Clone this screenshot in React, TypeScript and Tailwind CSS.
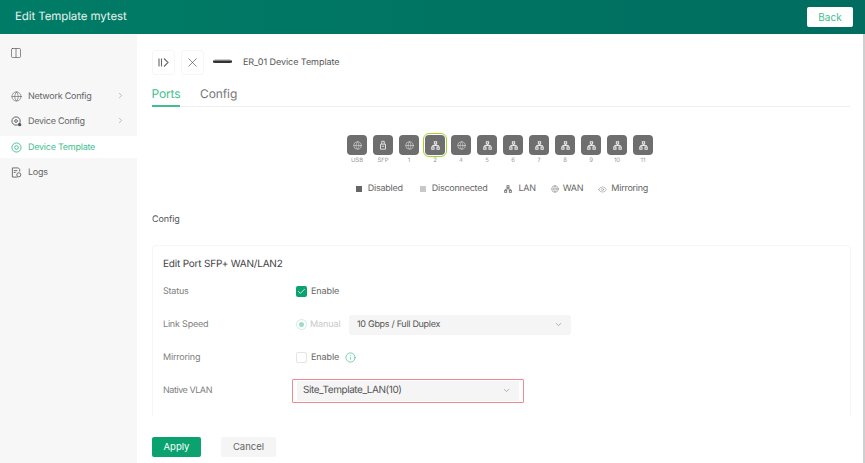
import React from "react";
import { ChevronRight, ChevronDown, Check, X, Info, Eye, Globe, Columns2 } from "lucide-react";

const Lan = ({ c = "#e8e8e8", s = 9 }: { c?: string; s?: number }) => (
  <svg width={s} height={s} viewBox="0 0 12 12" fill="none" stroke={c} strokeWidth="1.4">
    <rect x="4.5" y="1" width="3" height="3" />
    <rect x="1" y="8" width="3" height="3" />
    <rect x="8" y="8" width="3" height="3" />
    <path d="M6 4v2M2.5 8V6h7v2" />
  </svg>
);
const Wan = ({ c = "#e8e8e8", s = 9 }: { c?: string; s?: number }) => <Globe size={s} color={c} strokeWidth={1.4} />;
const Sfp = () => (
  <svg width="10" height="10" viewBox="0 0 12 12" fill="none" stroke="#e8e8e8" strokeWidth="1.1">
    <path d="M3 5h6v6H3zM4.500 5V1.500h3V5M4.500 7.500h3" />
  </svg>
);

const ports: { label: string; icon: "wan" | "lan" | "sfp"; active?: boolean }[] = [
  { label: "USB", icon: "wan" },
  { label: "SFP", icon: "sfp" },
  { label: "1", icon: "wan" },
  { label: "2", icon: "lan", active: true },
  { label: "4", icon: "wan" },
  { label: "5", icon: "lan" },
  { label: "6", icon: "lan" },
  { label: "7", icon: "lan" },
  { label: "8", icon: "lan" },
  { label: "9", icon: "lan" },
  { label: "10", icon: "lan" },
  { label: "11", icon: "lan" },
];

const Row = ({ label, children, h, wide }: { label: string; children: React.ReactNode; h: string; wide?: boolean }) => (
  <div className={`flex items-center ${h}`}>
    <div className={`w-[133px] pt-[1px] text-[9px] text-[#808080] ${wide ? "tracking-[-0.45px]" : "tracking-[-0.2px]"}`}>{label}</div>
    {children}
  </div>
);

export default function App() {
  return (
    <div className="flex h-[463px] w-[865px] flex-col overflow-hidden bg-white text-[#555] [text-rendering:geometricPrecision]" style={{ fontFamily: "Inter, 'Liberation Sans', sans-serif" }}>
      <header className="flex h-[34px] shrink-0 items-center justify-between bg-gradient-to-r from-[#007c66] to-[#006d60] pl-[15px] pr-[12px]">
        <span className="text-[11.5px] tracking-[-0.1px] text-[#e6f3ef]">Edit Template mytest</span>
        <button className="flex h-[20px] w-[46px] items-center justify-center rounded-[2px] bg-white text-[10px] text-[#3fbf8f]">Back</button>
      </header>
      <div className="flex min-h-0 flex-1">
        <aside className="w-[137px] shrink-0 bg-[#f7f7f7] pt-[13px] text-[9px] tracking-[-0.25px] text-[#666]">
          <Columns2 size={12} strokeWidth={1.2} color="#444" className="ml-[10px]" />
          <nav className="mt-[25px] flex flex-col">
            <div className="flex h-[25px] items-center pl-[11px] pr-[12px]">
              <Globe size={11} strokeWidth={1.2} color="#555" />
              <span className="ml-[6px] flex-1 pt-[1px]">Network Config</span>
              <ChevronRight size={9} color="#aaa" className="mb-[3px]" />
            </div>
            <div className="flex h-[27px] items-center pb-[2px] pl-[11px] pr-[12px]">
              <svg width="11" height="11" viewBox="0 0 12 12" fill="none" stroke="#555" strokeWidth="1">
                <circle cx="5.5" cy="5.5" r="4.5" />
                <circle cx="5.5" cy="5.5" r="1.5" />
                <circle cx="9.5" cy="9.5" r="1.8" fill="#555" stroke="none" />
              </svg>
              <span className="ml-[6px] flex-1 pt-[1px]">Device Config</span>
              <ChevronRight size={9} color="#aaa" className="mb-[3px]" />
            </div>
            <div className="flex h-[22px] items-center bg-white pl-[11px] text-[#3fbf8f]">
              <svg width="11" height="11" viewBox="0 0 12 12" fill="none" stroke="#3fbf8f" strokeWidth="1">
                <circle cx="6" cy="6" r="5" />
                <circle cx="6" cy="6" r="2" />
              </svg>
              <span className="ml-[6px] pt-[1px]">Device Template</span>
            </div>
            <div className="flex h-[29px] items-center pl-[11px]">
              <svg width="11" height="11" viewBox="0 0 12 12" fill="none" stroke="#555" strokeWidth="0.9">
                <path d="M7 11H1.500V1h6.500l1.500 1.500V5M3 4h4M3 6h2" />
                <circle cx="8.5" cy="8.5" r="2.2" />
              </svg>
              <span className="ml-[6px] pt-[1px]">Logs</span>
            </div>
          </nav>
        </aside>
        <main className="flex min-w-0 flex-1 flex-col pl-[15px] pr-[13px] pt-[16px]">
          <div className="flex h-[25px] items-center">
            <div className="flex h-[25px] w-[23px] items-center justify-center rounded-[3px] border border-[#f6f6f6]">
              <svg width="11" height="11" viewBox="0 0 11 11" fill="none" stroke="#666" strokeWidth="1.1">
                <path d="M1 1.500v8M3.500 1.500v8M6 1.500l4 4-4 4" />
              </svg>
            </div>
            <div className="ml-[6px] flex h-[25px] w-[23px] items-center justify-center rounded-[3px] border border-[#f6f6f6]">
              <X size={15} strokeWidth={1} color="#444" />
            </div>
            <svg width="19" height="5" viewBox="0 0 19 5" className="mb-[2px] ml-[9px]">
              <path d="M2 0.500H17L18 1.500H1z" fill="#999" />
              <path d="M0 1.500H19V3.500L17 4H2L0 3.500z" fill="#333" />
            </svg>
            <span className="ml-[11px] pt-[1px] text-[9px] tracking-[-0.05px] text-[#555]">ER_01 Device Template</span>
          </div>
          <div className="mt-[8px] flex h-[24px] items-start border-b border-[#eee]">
            <span className="flex h-[24px] w-[28px] justify-center border-b-2 border-[#3fbf8f] text-[12px] leading-[22px] tracking-[-0.1px] text-[#3fbf8f]">Ports</span>
            <span className="ml-[20px] text-[12px] leading-[22px] tracking-[-0.1px] text-[#777]">Config</span>
          </div>
          <div className="mt-[28px] flex justify-center pr-[2px]">
            <div className="flex gap-[6px]">
              {ports.map((p) => (
                <div key={p.label} className="flex w-[20px] flex-col items-center">
                  <div className={`flex h-[20px] w-[20px] items-center justify-center rounded-[4px] bg-[#6e6e6e] ${p.active ? "outline-[1.5px] outline-offset-[1px] outline-[#a2d42c]" : ""}`}>
                    {p.icon === "wan" ? <Wan /> : p.icon === "lan" ? <Lan /> : <Sfp />}
                  </div>
                  <span className="mt-[1px] text-[6px] leading-[9px] text-[#999]">{p.label}</span>
                </div>
              ))}
            </div>
          </div>
          <div className="mt-[17px] flex h-[14px] items-center justify-center gap-[17px] pl-[2px] text-[9px] tracking-[-0.25px] text-[#666]">
            <span className="flex items-center gap-[6px]"><i className="h-[6px] w-[6px] bg-[#666]" />Disabled</span>
            <span className="flex items-center gap-[6px]"><i className="h-[6px] w-[6px] bg-[#c8c8c8]" />Disconnected</span>
            <span className="mr-[-2px] flex items-center gap-[6px]"><Lan c="#777" s={8} />LAN</span>
            <span className="mr-[-2px] flex items-center gap-[4px]"><Wan c="#777" s={8} />WAN</span>
            <span className="flex items-center gap-[4px]"><Eye size={9} color="#777" strokeWidth={1.2} />Mirroring</span>
          </div>
          <div className="mt-[18px] text-[9px] leading-[12px] tracking-[-0.1px] text-[#555]">Config</div>
          <section className="mr-[-1px] mt-[19px] h-[171px] rounded-t-[4px] border border-b-0 border-[#f6f6f6] pl-[10px] pt-[11px]">
            <h2 className="text-[10px] font-normal leading-[14px] tracking-[-0.2px] text-[#444]">Edit Port SFP+ WAN/LAN2</h2>
            <div className="mt-[3px]">
              <Row label="Status" h="h-[34px]">
                <span className="flex h-[11px] w-[11px] items-center justify-center rounded-[2px] bg-[#0aa36f]"><Check size={9} color="#fff" strokeWidth={2} /></span>
                <span className="ml-[4px] pt-[1px] text-[9px] tracking-[-0.1px] text-[#666]">Enable</span>
              </Row>
              <Row label="Link Speed" h="h-[33px]">
                <span className="flex h-[11px] w-[11px] items-center justify-center rounded-full border border-[#cdeee2]"><i className="h-[5px] w-[5px] rounded-full bg-[#9fdcc6]" /></span>
                <span className="ml-[3px] w-[35px] pt-[1px] text-[9px] tracking-[-0.1px] text-[#c8c8c8]">Manual</span>
                <div className="ml-[4px] flex h-[20px] w-[222px] items-center justify-between rounded-[3px] bg-[#f5f5f5] pl-[8px] pr-[8px] text-[9px] tracking-[-0.3px] text-[#555]">
                  10 Gbps / Full Duplex
                  <ChevronDown size={9} color="#999" />
                </div>
              </Row>
              <Row label="Mirroring" h="h-[33px]">
                <span className="h-[11px] w-[11px] rounded-[2px] border border-[#e4e4e4]" />
                <span className="ml-[4px] pt-[1px] text-[9px] tracking-[-0.1px] text-[#666]">Enable</span>
                <Info size={11} color="#3fbf8f" strokeWidth={1.5} className="ml-[6px]" />
              </Row>
              <Row label="Native VLAN" h="h-[33px]" wide>
                <div className="ml-[-4px] flex h-[24px] w-[232px] items-center rounded-[1px] border border-[#ef8a90] px-[4px] py-[1px]">
                  <div className="flex h-full w-full items-center justify-between bg-[#f5f5f5] pl-[6px] pr-[8px] text-[10px] tracking-[-0.45px] text-[#555]">
                    Site_Template_LAN(10)
                    <ChevronDown size={9} color="#999" />
                  </div>
                </div>
              </Row>
            </div>
          </section>
          <div className="mt-[21px] flex h-[20px] items-center">
            <button className="flex h-[20px] w-[49px] items-center justify-center rounded-[2px] bg-[#0aa36f] text-[9.5px] text-white">Apply</button>
            <button className="ml-[20px] flex h-[20px] w-[55px] items-center justify-center rounded-[2px] bg-[#f5f5f5] text-[9.5px] text-[#666]">Cancel</button>
          </div>
        </main>
        <div className="w-[2px] shrink-0 bg-[#cfcfcf]" />
      </div>
    </div>
  );
}
